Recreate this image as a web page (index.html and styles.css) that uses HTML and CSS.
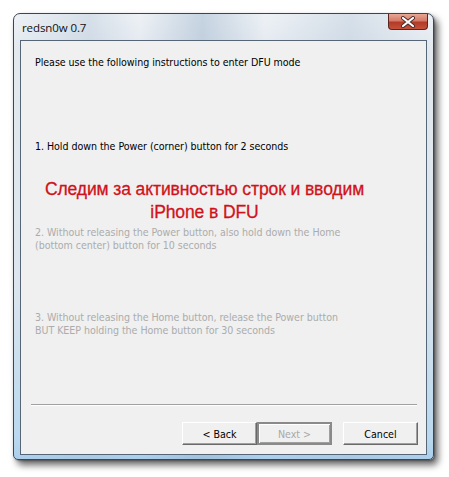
FILE: index.html
```html
<!DOCTYPE html>
<html>
<head>
<meta charset="utf-8">
<link rel="stylesheet" href="styles.css">
</head>
<body>
<div class="window">
  <div class="titlebar">
    <span class="title">redsn0w 0.7</span>
    <div class="close">
      <svg width="18" height="12" viewBox="0 0 18 12">
        <path d="M4 2 L14 10 M14 2 L4 10" stroke="#4a2a2a" stroke-width="4" stroke-linecap="round"/>
        <path d="M4 2 L14 10 M14 2 L4 10" stroke="#ffffff" stroke-width="2.2" stroke-linecap="round"/>
      </svg>
    </div>
  </div>
  <div class="client">
    <p class="line intro">Please use the following instructions to enter DFU mode</p>
    <p class="line step1">1. Hold down the Power (corner) button for 2 seconds</p>
    <p class="note">Следим за активностью строк и вводим<br>iPhone в DFU</p>
    <p class="line dim step2">2. Without releasing the Power button, also hold down the Home<br>(bottom center) button for 10 seconds</p>
    <p class="line dim step3">3. Without releasing the Home button, release the Power button<br>BUT KEEP holding the Home button for 30 seconds</p>
    <div class="spacer"></div>
    <div class="sep"></div>
    <div class="buttons">
      <div class="btn">&lt; Back</div>
      <div class="btn default disabled">Next &gt;</div>
      <div class="btn cancel">Cancel</div>
    </div>
  </div>
</div>
</body>
</html>
```
FILE: styles.css
```css
html, body {
  margin: 0;
  padding: 0;
  background: #ffffff;
}
body {
  width: 449px;
  height: 477px;
  overflow: hidden;
}
.window {
  margin: 13px 0 0 13px;
  width: 421px;
  height: 447px;
  box-sizing: border-box;
  border: 1px solid #3b4654;
  border-radius: 7px 7px 5px 5px;
  background:
    linear-gradient(90deg, rgba(255,255,255,0) 0%, rgba(170,190,210,0.35) 18%, rgba(255,255,255,0) 30%, rgba(150,175,200,0.45) 45%, rgba(255,255,255,0) 60%, rgba(170,190,210,0.35) 80%, rgba(255,255,255,0) 100%),
    linear-gradient(180deg, #eef2f6 0%, #e3e9ef 8%, #dde6ee 60%, #b9d8ef 96%, #a9cfee 100%);
  box-shadow: 4px 5px 7px rgba(0,0,0,0.6), 1px 1px 2px rgba(0,0,0,0.3);
  display: flex;
  flex-direction: column;
  padding: 0 6px 4px 6px;
}
.titlebar {
  height: 26px;
  display: flex;
  align-items: flex-start;
  justify-content: space-between;
  flex: none;
}
.title {
  font-family: "Open Sans", "Liberation Sans", sans-serif;
  font-size: 11.5px;
  color: #101010;
  margin: 8px 0 0 2px;
  line-height: 12px;
  letter-spacing: -0.1px;
}
.close {
  width: 40px;
  height: 16px;
  margin-right: -1px;
  box-sizing: border-box;
  border: 1px solid #5b2420;
  border-top: none;
  border-radius: 0 0 4px 4px;
  background: linear-gradient(180deg, #e9a795 0%, #d47a68 45%, #b33a26 55%, #c4513c 100%);
  display: flex;
  align-items: center;
  justify-content: center;
}
.client {
  flex: 1;
  background: #f0f0f0;
  border: 1px solid #566677;
  display: flex;
  flex-direction: column;
  padding: 0 10px 9px 10px;
  box-sizing: border-box;
}
.line {
  font-family: "DejaVu Sans Condensed", "DejaVu Sans", sans-serif;
  font-size: 10.6px;
  line-height: 13px;
  color: #000;
  margin: 0 0 0 4px;
  letter-spacing: -0.05px;
}
.intro { margin-top: 15px; }
.step1 { margin-top: 71px; }
.note {
  font-family: "Liberation Sans", Arial, sans-serif;
  font-size: 17.5px;
  line-height: 23px;
  color: #d0121b;
  text-align: center;
  margin: 25px 0 0 0;
  padding-right: 38px;
  -webkit-text-stroke: 0.3px #d0121b;
  letter-spacing: -0.1px;
}
.dim { color: #acacac; }
.step2 { margin-top: 2px; }
.step3 { margin-top: 59px; }
.spacer { flex: 1; }
.sep {
  height: 0;
  border-top: 1px solid #a0a0a0;
  border-bottom: 1px solid #ffffff;
  margin: 0 -1px 16px 0;
}
.buttons {
  display: flex;
  justify-content: flex-end;
  margin-right: -2px;
}
.btn {
  width: 75px;
  height: 23px;
  box-sizing: border-box;
  background: #f0f0f0;
  border-top: 1px solid #ffffff;
  border-left: 1px solid #ffffff;
  border-right: 1px solid #696969;
  border-bottom: 1px solid #696969;
  box-shadow: inset -1px -1px 0 #a0a0a0;
  font-family: "DejaVu Sans Condensed", "DejaVu Sans", sans-serif;
  font-size: 10.6px;
  color: #000;
  display: flex;
  align-items: center;
  justify-content: center;
}
.default {
  border: 2px solid #8a8a8a;
  box-shadow: inset 1px 1px 0 #ffffff, inset -1px -1px 0 #a0a0a0;
}
.disabled { color: #a8a8a8; }
.cancel { margin-left: 11px; }
```
